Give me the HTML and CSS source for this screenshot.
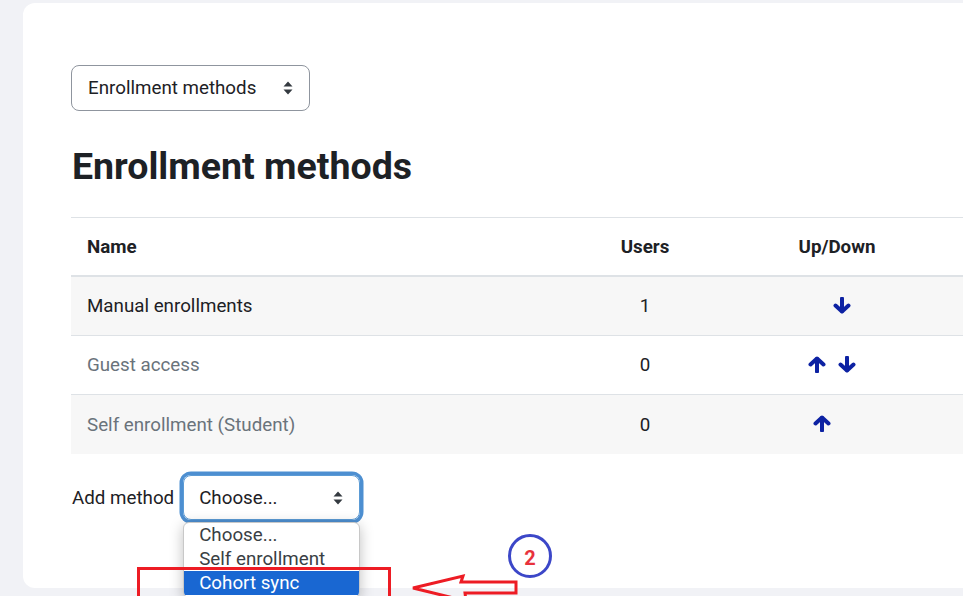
FILE: index.html
```html
<!DOCTYPE html>
<html>
<head>
<meta charset="utf-8">
<link rel="stylesheet" href="styles.css">
</head>
<body>
<div class="page">
  <div class="card">
    <div class="nav-select">
      <span>Enrollment methods</span>
      <svg class="updown-caret" width="10" height="14" viewBox="0 0 10 14"><path d="M5 0.5 L9.5 5.5 H0.5 Z M5 13.5 L9.5 8.5 H0.5 Z" fill="#343a40"/></svg>
    </div>
    <h2 class="title">Enrollment methods</h2>
    <div class="table">
      <div class="row head">
        <div class="cell name">Name</div>
        <div class="cell users">Users</div>
        <div class="cell updown">Up/Down</div>
        <div class="cell rest"></div>
      </div>
      <div class="row odd">
        <div class="cell name">Manual enrollments</div>
        <div class="cell users">1</div>
        <div class="cell updown"><span class="icons r1">
          <svg class="arrow" width="18" height="17" viewBox="0 0 18 17"><path d="M9 1.5 V14" stroke="#0d22a3" stroke-width="4" stroke-linecap="round"/><path d="M2.5 8.5 L9 14.5 L15.5 8.5" fill="none" stroke="#0d22a3" stroke-width="4" stroke-linecap="round" stroke-linejoin="round"/></svg>
        </span></div>
        <div class="cell rest"></div>
      </div>
      <div class="row even">
        <div class="cell name dim">Guest access</div>
        <div class="cell users">0</div>
        <div class="cell updown"><span class="icons r2">
          <svg class="arrow" width="18" height="17" viewBox="0 0 18 17"><path d="M9 15.5 V3" stroke="#0d22a3" stroke-width="4" stroke-linecap="round"/><path d="M2.5 8.5 L9 2.5 L15.5 8.5" fill="none" stroke="#0d22a3" stroke-width="4" stroke-linecap="round" stroke-linejoin="round"/></svg>
          <svg class="arrow" width="18" height="17" viewBox="0 0 18 17"><path d="M9 1.5 V14" stroke="#0d22a3" stroke-width="4" stroke-linecap="round"/><path d="M2.5 8.5 L9 14.5 L15.5 8.5" fill="none" stroke="#0d22a3" stroke-width="4" stroke-linecap="round" stroke-linejoin="round"/></svg>
        </span></div>
        <div class="cell rest"></div>
      </div>
      <div class="row odd last">
        <div class="cell name dim">Self enrollment (Student)</div>
        <div class="cell users">0</div>
        <div class="cell updown"><span class="icons r3">
          <svg class="arrow" width="18" height="17" viewBox="0 0 18 17"><path d="M9 15.5 V3" stroke="#0d22a3" stroke-width="4" stroke-linecap="round"/><path d="M2.5 8.5 L9 2.5 L15.5 8.5" fill="none" stroke="#0d22a3" stroke-width="4" stroke-linecap="round" stroke-linejoin="round"/></svg>
        </span></div>
        <div class="cell rest"></div>
      </div>
    </div>
    <div class="add-row">
      <span class="add-label">Add method</span>
      <div class="choose-wrap">
        <div class="choose">
          <span>Choose...</span>
          <svg class="updown-caret" width="10" height="14" viewBox="0 0 10 14"><path d="M5 0.5 L9.5 5.5 H0.5 Z M5 13.5 L9.5 8.5 H0.5 Z" fill="#343a40"/></svg>
        </div>
        <ul class="options">
          <li>Choose...</li>
          <li>Self enrollment</li>
          <li class="sel">Cohort sync</li>
        </ul>
      </div>
    </div>
  </div>
</div>
<div class="mark-box"></div>
<svg class="mark-arrow" width="120" height="40" viewBox="400 566 120 40"><polygon points="413,588 463,576 461,582 516,582 516,593 465,593 466,601" fill="none" stroke="#ed1c24" stroke-width="3" stroke-linejoin="miter"/></svg>
<div class="mark-circle"><span>2</span></div>
</body>
</html>
```

FILE: styles.css
```css
* { box-sizing: border-box; }
html, body { margin: 0; padding: 0; }
body {
  background: #f1f2f6;
  font-family: Roboto, "Liberation Sans", sans-serif;
  color: #1d2125;
  width: 963px;
  height: 596px;
  overflow: hidden;
  position: relative;
}
.page { padding: 3px 0 0 23px; }
.card {
  background: #fff;
  border-radius: 12px 0 0 12px;
  height: 585px;
  margin-right: -40px;
  padding: 62px 0 0 48px;
}
.nav-select {
  width: 239px;
  height: 46px;
  border: 1px solid #8f959e;
  border-radius: 8px;
  display: flex;
  align-items: center;
  justify-content: space-between;
  padding: 0 16px 0 16px;
  font-size: 18.75px;
  color: #1d2125;
}
.title {
  font-size: 37.5px;
  font-weight: 700;
  line-height: 45px;
  margin: 33px 0 28px 1px;
}
.table { width: 1100px; font-size: 18.75px; }
.row {
  display: grid;
  grid-template-columns: 504px 140px 244px 1fr;
  height: 59px;
  border-bottom: 1px solid #dee2e6;
  align-items: center;
}
.row.head { border-top: 1px solid #dee2e6; border-bottom: 2px solid #dee2e6; height: 60px; font-weight: 700; }
.row.odd { background: #f7f7f7; }
.row.last { border-bottom: none; }
.cell { padding: 0 16px; }
.users, .updown { text-align: center; }
.dim { color: #6a737b; }
.icons { display: inline-flex; align-items: center; gap: 12px; vertical-align: middle; position: relative; top: -2px; }
.icons.r1 { margin-left: 10px; }
.icons.r2 { margin-left: -10px; }
.icons.r3 { margin-left: -30px; }
.arrow { display: block; }
.add-row {
  display: flex;
  align-items: center;
  margin-top: 21px;
  font-size: 18.75px;
}
.add-label { margin-left: 1px; margin-right: 9px; }
.choose-wrap { position: relative; }
.choose {
  width: 177px;
  height: 45px;
  border: 1px solid #5b9bd5;
  border-radius: 8px;
  box-shadow: 0 0 0 3.5px #4d8fd1;
  display: flex;
  align-items: center;
  justify-content: space-between;
  padding: 0 16px 0 15px;
  color: #1d2125;
}
.options {
  position: absolute;
  left: 0;
  top: 47px;
  width: 177px;
  margin: 0;
  padding: 0 0 2px 0;
  list-style: none;
  background: #fff;
  border: 1px solid #c8c8c8;
  border-radius: 6px;
  box-shadow: 0 3px 14px rgba(0,0,0,0.25);
  overflow: hidden;
  z-index: 2;
}
.options li {
  height: 24px;
  line-height: 24px;
  padding-left: 15px;
  color: #3a3f44;
  white-space: nowrap;
}
.options li.sel { background: #1967d2; color: #fff; }
.mark-box {
  position: absolute;
  left: 137px;
  top: 567px;
  width: 254px;
  height: 40px;
  border: 3px solid #ed1c24;
  z-index: 3;
}
.mark-arrow { position: absolute; left: 400px; top: 566px; z-index: 3; }
.mark-circle {
  position: absolute;
  left: 508px;
  top: 534px;
  width: 44px;
  height: 44px;
  border: 3.5px solid #3c47c8;
  border-radius: 50%;
  display: flex;
  align-items: center;
  justify-content: center;
  color: #e8323c;
  font-weight: 700;
  font-size: 20px;
  z-index: 3;
}
.mark-circle span { margin-top: 3px; }
```
